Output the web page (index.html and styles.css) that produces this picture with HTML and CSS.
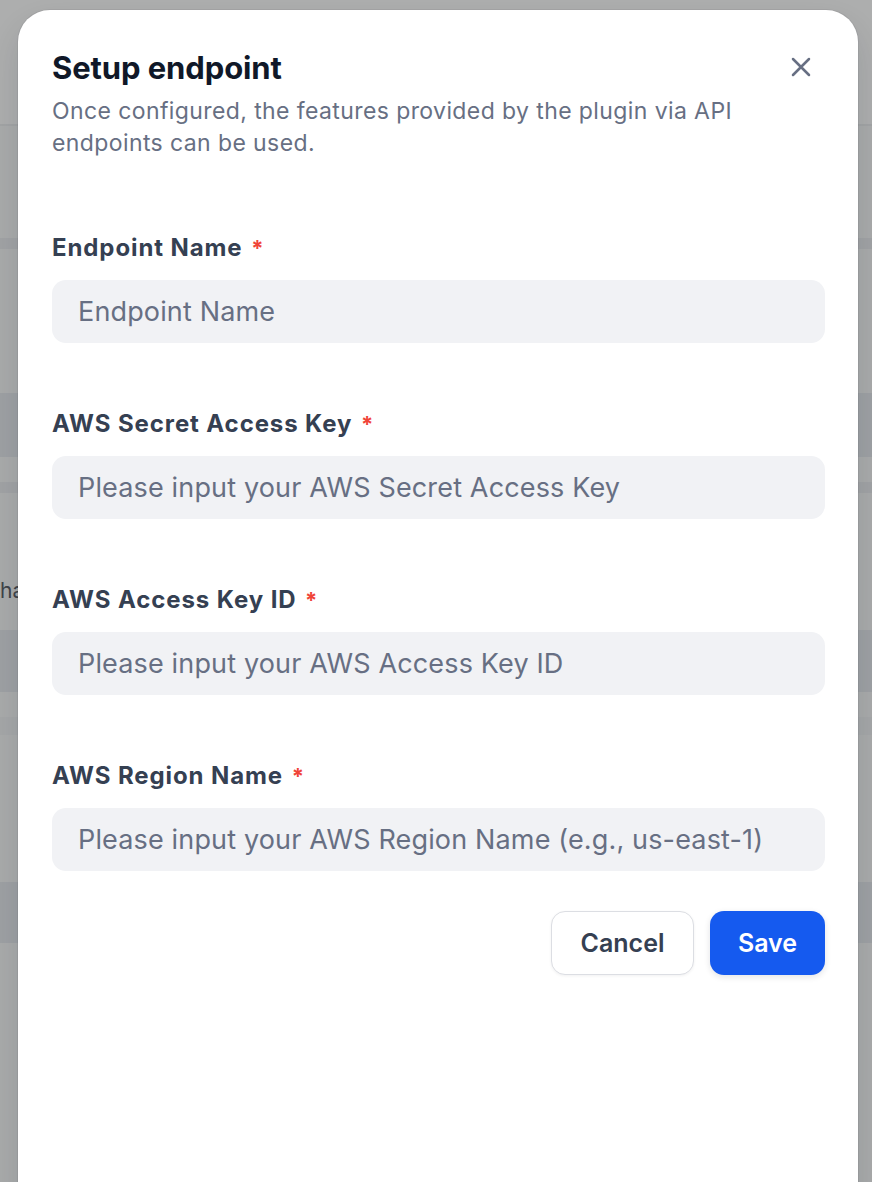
FILE: index.html
```html
<!DOCTYPE html>
<html lang="en">
<head>
<meta charset="utf-8">
<title>Setup endpoint</title>
<link rel="stylesheet" href="styles.css">
</head>
<body>
<div class="page">
  <div class="pg-header"></div>
  <div class="pg-line"></div>
  <div class="pg-band b1"></div>
  <div class="pg-block k1"></div>
  <div class="pg-band b2"></div>
  <div class="pg-text">ha</div>
  <div class="pg-block k2"></div>
  <div class="pg-band b3"></div>
  <div class="pg-block k3"></div>
</div>

<div class="modal" role="dialog" aria-labelledby="dlg-title">
  <div class="head">
    <h2 class="title" id="dlg-title">Setup endpoint</h2>
    <button class="close" aria-label="Close">
      <svg viewBox="0 0 24 24" width="32" height="32" fill="none" stroke="currentColor" stroke-width="1.9" stroke-linecap="round"><path d="M18 6L6 18M6 6l12 12"/></svg>
    </button>
  </div>
  <p class="desc">Once configured, the features provided by the plugin via API endpoints can be used.</p>

  <form class="form">
    <div class="field">
      <label class="label">Endpoint Name <span class="req">*</span></label>
      <input class="input" type="text" placeholder="Endpoint Name">
    </div>
    <div class="field">
      <label class="label">AWS Secret Access Key <span class="req">*</span></label>
      <input class="input" type="text" placeholder="Please input your AWS Secret Access Key">
    </div>
    <div class="field">
      <label class="label">AWS Access Key ID <span class="req">*</span></label>
      <input class="input" type="text" placeholder="Please input your AWS Access Key ID">
    </div>
    <div class="field">
      <label class="label">AWS Region Name <span class="req">*</span></label>
      <input class="input" type="text" placeholder="Please input your AWS Region Name (e.g., us-east-1)">
    </div>
    <div class="actions">
      <button type="button" class="btn btn-secondary">Cancel</button>
      <button type="button" class="btn btn-primary">Save</button>
    </div>
  </form>
</div>
</body>
</html>
```

FILE: styles.css
```css
html, body {
  margin: 0;
  padding: 0;
  height: 100%;
}
body {
  background: #a9abab;
  overflow: hidden;
  font-family: Inter, "Noto Sans", "Liberation Sans", sans-serif;
}

/* dimmed page behind the dialog */
.page {
  width: 100%;
}
.pg-header {
  height: 124px;
  background: #adaeae;
}
.pg-line {
  height: 2px;
  background: #a2a4a5;
}
.pg-band {
  background: #a1a3a5;
}
.pg-block {
  background: #9ea1a4;
}
.b1 { margin-top: 112px; height: 11px; }
.k1 { margin-top: 144px; height: 64px; }
.b2 { margin-top: 25px; height: 11px; }
.pg-text {
  margin-top: 86px;
  height: 24px;
  white-space: nowrap;
  font-size: 21px;
  line-height: 24px;
  color: #3f4349;
}
.k2 { margin-top: 27px; height: 62px; }
.b3 { margin-top: 25px; height: 18px; background: #a5a7a8; }
.k3 { margin-top: 147px; height: 61px; }

/* dialog */
.modal {
  position: absolute;
  left: 18px;
  top: 10px;
  width: 840px;
  height: 1260px;
  box-sizing: border-box;
  padding: 38px 33px 0 34px;
  background: #ffffff;
  border-radius: 32px;
  box-shadow: 0 0 0 1px rgba(16, 24, 40, 0.06), 0 16px 32px rgba(16, 24, 40, 0.12);
}
.head {
  display: flex;
  align-items: flex-start;
  justify-content: space-between;
}
.title {
  margin: 0;
  font-size: 31px;
  line-height: 40px;
  font-weight: 700;
  color: #101828;
  letter-spacing: -0.1px;
}
.close {
  width: 48px;
  height: 40px;
  margin-top: -1px;
  padding: 0;
  border: 0;
  background: transparent;
  color: #676f83;
  display: flex;
  align-items: center;
  justify-content: center;
  cursor: pointer;
}
.desc {
  margin: 7px 0 0;
  font-size: 23px;
  line-height: 32px;
  letter-spacing: 0.4px;
  color: #676f83;
}

.form {
  margin-top: 73px;
  display: flex;
  flex-direction: column;
  gap: 65px;
}
.field {
  display: flex;
  flex-direction: column;
  gap: 16px;
}
.label {
  font-size: 24px;
  line-height: 32px;
  font-weight: 700;
  letter-spacing: 0.9px;
  color: #354052;
}
.req {
  color: #f04438;
  margin-left: 2px;
  font-size: 22px;
}
.input {
  height: 63px;
  box-sizing: border-box;
  width: 100%;
  padding: 0 26px;
  border: 0;
  border-radius: 14px;
  background: #f1f2f5;
  font-family: inherit;
  font-size: 27px;
  letter-spacing: 0.15px;
  color: #101828;
  outline: none;
}
.input::placeholder {
  color: #676f83;
  opacity: 1;
}

.actions {
  margin-top: -25px;
  display: flex;
  justify-content: flex-end;
  gap: 16px;
}
.btn {
  height: 64px;
  box-sizing: border-box;
  border-radius: 14px;
  font-family: inherit;
  font-size: 25px;
  font-weight: 600;
  cursor: pointer;
}
.btn-secondary {
  width: 143px;
  background: #ffffff;
  color: #354052;
  border: 1px solid #dcdee3;
  box-shadow: 0 1px 3px rgba(16, 24, 40, 0.06);
}
.btn-primary {
  width: 115px;
  background: #155aef;
  color: #ffffff;
  border: 0;
  box-shadow: 0 2px 6px rgba(16, 24, 40, 0.12);
}
```
